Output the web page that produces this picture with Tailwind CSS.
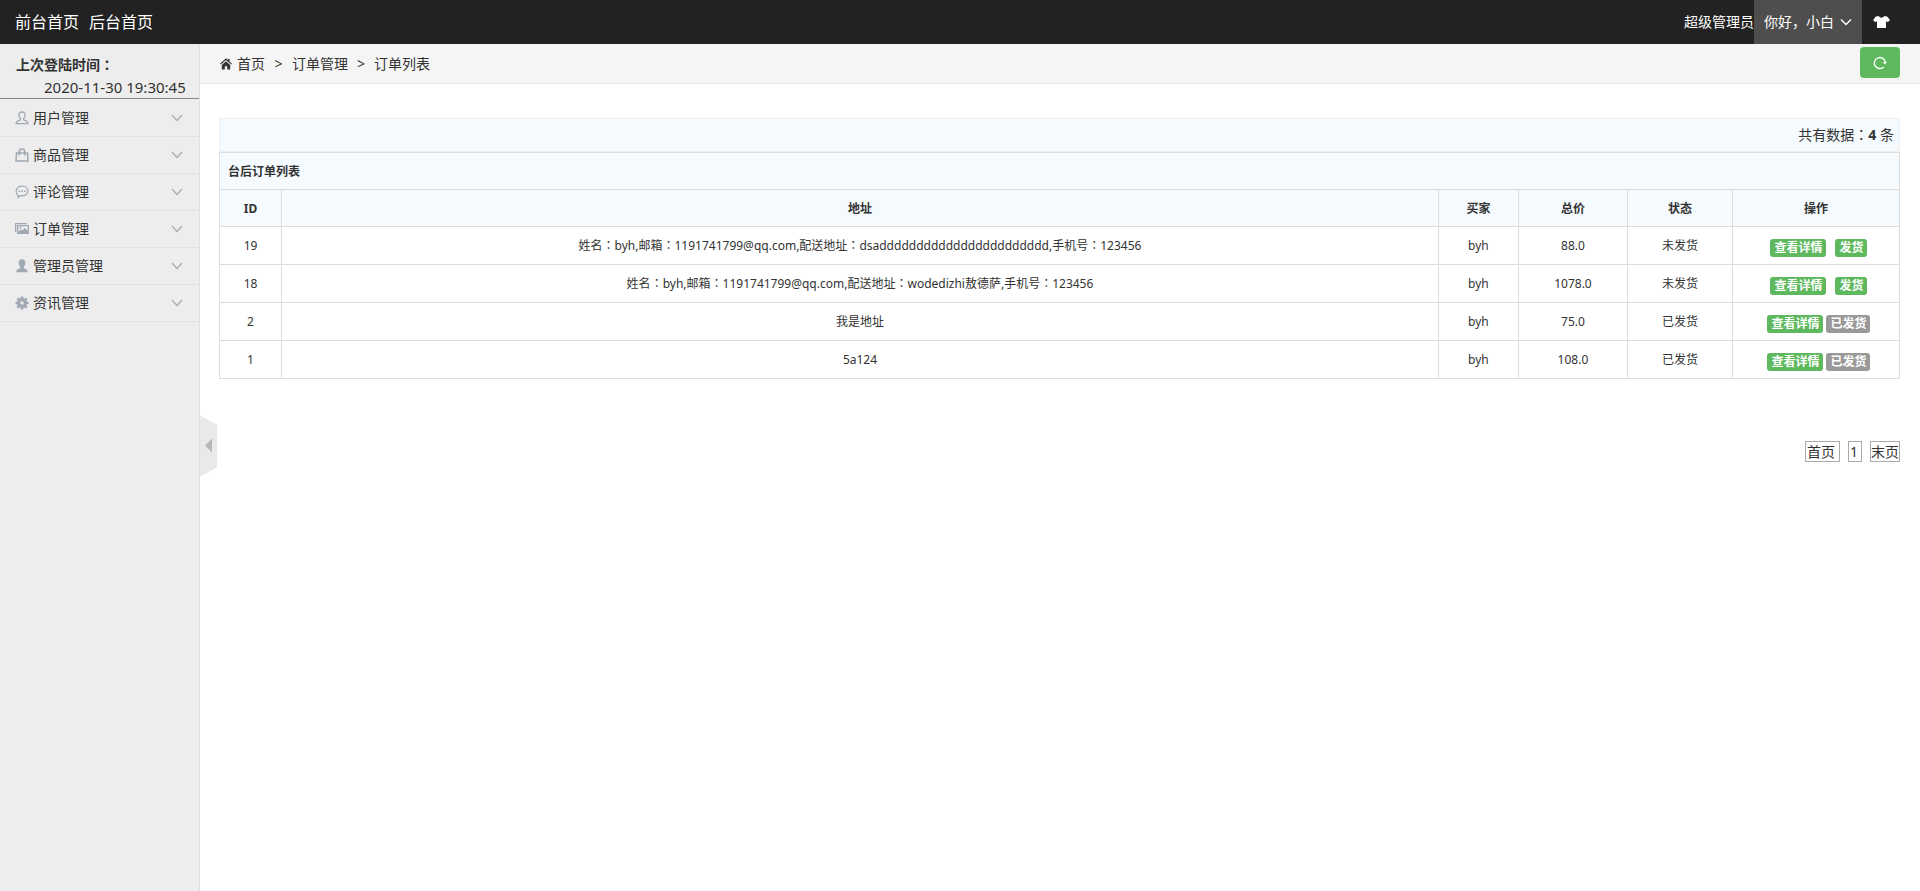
<!DOCTYPE html>
<html lang="zh-CN">
<head>
<meta charset="utf-8">
<title>订单列表</title>
<script src="https://cdn.jsdelivr.net/npm/@tailwindcss/browser@4"></script>
</head>
<body class="flex min-h-screen flex-col bg-white font-['Noto_Sans','Noto_Sans_CJK_SC',sans-serif] text-sm text-[#333]">

<svg class="hidden">
  <symbol id="down" viewBox="0 0 12 12"><path d="M1 3l5 5.500L11 3" fill="none" stroke="currentColor" stroke-width="1.200"/></symbol>
</svg>

<header class="flex h-11 shrink-0 items-center justify-between bg-[#222] text-white">
  <nav class="flex gap-2.5 pl-[15px] text-base">
    <a href="#">前台首页</a>
    <a href="#">后台首页</a>
  </nav>
  <div class="flex h-full items-center pr-[30px]">
    <span>超级管理员</span>
    <button type="button" class="flex h-full w-27 items-center justify-center gap-1.5 bg-[#4e4e4e]"><span>你好，小白</span>
      <svg class="h-3 w-3" viewBox="0 0 12 12" fill="none" stroke="currentColor" stroke-width="1.500"><path d="M1 3.500l5 5 5-5"/></svg>
    </button>
    <button type="button" aria-label="换肤" class="ml-[11px]">
      <svg class="h-4 w-[17px]" viewBox="0 0 17 16" fill="currentColor"><path d="M5.500 2Q8.500 5.300 11.500 2l3 .8L17 6.200 14.500 8.200 13 7V14H4V7L2.500 8.200 0 6.200l2.500-3.400z"/></svg>
    </button>
  </div>
</header>

<div class="flex grow">
  <aside class="w-50 shrink-0 border-r border-[#e0e0e0] bg-[#ededed]">
    <div class="border-b border-[#888] pt-2.5 pl-4 leading-[22px]">
      <p class="font-bold">上次登陆时间<span lang="zh-TW" class="font-['Noto_Sans_CJK_TC',sans-serif] leading-none">：</span></p>
      <p class="pl-7 text-[15px] whitespace-nowrap">2020-11-30 19:30:45</p>
    </div>
    <nav class="pt-px text-[#333]">
      <button type="button" class="flex h-[37px] w-full items-center border-b border-[#e2e2e2] pr-4 pl-[15px]">
        <svg class="mr-1 h-3.5 w-3.5 text-[#a0a8b3]" viewBox="0 0 14 14" fill="none" stroke="currentColor" stroke-width="1.300" stroke-linejoin="round"><path d="M7 1C4.800 1 4 2.500 4 4.200c0 1.500.5 2.600 1.400 3.400v1.200C3 9.500 1 10.200 1 12.700h12c0-2.500-2-3.200-4.400-3.900V7.600C9.500 6.800 10 5.700 10 4.200 10 2.500 9.200 1 7 1z"/></svg>
        <span>用户管理</span><svg class="ml-auto h-3 w-3 text-[#aaa]"><use href="#down"/></svg>
      </button>
      <button type="button" class="flex h-[37px] w-full items-center border-b border-[#e2e2e2] pr-4 pl-[15px]">
        <svg class="mr-1 h-3.5 w-3.5 text-[#a0a8b3]" viewBox="0 0 14 14" fill="none" stroke="currentColor" stroke-width="1.500"><path d="M1.500 5h11L13 13H1zM4.300 7.500V3.700c0-3.600 5.400-3.600 5.400 0v3.800"/></svg>
        <span>商品管理</span><svg class="ml-auto h-3 w-3 text-[#aaa]"><use href="#down"/></svg>
      </button>
      <button type="button" class="flex h-[37px] w-full items-center border-b border-[#e2e2e2] pr-4 pl-[15px]">
        <svg class="mr-1 h-3.5 w-3.5 text-[#a0a8b3]" viewBox="0 0 14 14" fill="none" stroke="currentColor" stroke-width="1.200"><path d="M3 10.500C-.5 7.500 1.300 1.200 7 1.200c8 0 8 9.600 0 9.600-.8 0-1.200 0-1.800-.2L3 12.800z"/><path d="M3.500 6.200h1.600M6.300 6.200h1.600M9.100 6.200h1.600" stroke-width="1.600"/></svg>
        <span>评论管理</span><svg class="ml-auto h-3 w-3 text-[#aaa]"><use href="#down"/></svg>
      </button>
      <button type="button" class="flex h-[37px] w-full items-center border-b border-[#e2e2e2] pr-4 pl-[15px]">
        <svg class="mr-1 h-3.5 w-3.5 text-[#a0a8b3]" viewBox="0 0 14 14" fill="currentColor"><path d="M0 1h12v1.300H1.300V10H0z"/><path fill-rule="evenodd" d="M2 3h12v9H2zM3.300 4.300v5.500L6 7.500l1.800 1 2-2.700 2.900 3V4.300z"/><circle cx="5.500" cy="5.800" r="1"/></svg>
        <span>订单管理</span><svg class="ml-auto h-3 w-3 text-[#aaa]"><use href="#down"/></svg>
      </button>
      <button type="button" class="flex h-[37px] w-full items-center border-b border-[#e2e2e2] pr-4 pl-[15px]">
        <svg class="mr-1 h-3.5 w-3.5 text-[#a0a8b3]" viewBox="0 0 14 14" fill="currentColor"><path d="M7 .3C4.600.3 3.700 2 3.700 4c0 1.600.7 3 1.600 3.800v1.400C3 9.800 1.500 10.300 1.300 13.300h11.400c-.2-3-1.700-3.500-4-4.100V7.800C9.600 7 10.300 5.600 10.300 4 10.300 2 9.400.3 7 .3z"/></svg>
        <span>管理员管理</span><svg class="ml-auto h-3 w-3 text-[#aaa]"><use href="#down"/></svg>
      </button>
      <button type="button" class="flex h-[37px] w-full items-center border-b border-[#e2e2e2] pr-4 pl-[15px]">
        <svg class="mr-1 h-3.5 w-3.5 text-[#a0a8b3]" viewBox="0 0 14 14" fill="none" stroke="currentColor"><circle cx="7" cy="7" r="3.300" stroke-width="3.200"/><path d="M7 .5v3M7 10.500v3M.5 7h3M10.500 7h3M2.300 2.300l2 2M9.700 9.700l2 2M11.700 2.300l-2 2M4.300 9.700l-2 2" stroke-width="2.600"/></svg>
        <span>资讯管理</span><svg class="ml-auto h-3 w-3 text-[#aaa]"><use href="#down"/></svg>
      </button>
    </nav>
  </aside>

  <!-- Sidebar toggle, floats over the content at mid-window -->
  <button type="button" aria-label="收起菜单" class="fixed top-1/2 left-50 -translate-y-1/2">
    <svg class="h-[61px] w-[17px]" viewBox="0 0 17 61"><path d="M0 0l17 9v43L0 61z" fill="#e9e9e9"/><path d="M12 23v14l-7-7z" fill="#b8b8b8"/></svg>
  </button>

  <main class="min-w-0 grow">
    <div class="flex h-10 items-center justify-between border-b border-[#e5e5e5] bg-[#f5f5f5] pr-5 pl-5">
      <nav class="flex items-center" aria-label="面包屑">
        <svg class="mr-[5px] h-3 w-3 text-[#333]" viewBox="0 0 12 12" fill="currentColor"><path d="M6 .3l1.800 1.600V1h1.700v2.400L12 5.700l-.8.9L6 2 .8 6.600 0 5.700z"/><path d="M6 3.200l4.200 3.700V11.500H7.200V8.300H4.800v3.200h-3V6.900z"/></svg>
        <a href="#">首页</a>
        <span class="w-[27px] text-center">&gt;</span>
        <a href="#">订单管理</a>
        <span class="w-[26px] text-center">&gt;</span>
        <span>订单列表</span>
      </nav>
      <button type="button" aria-label="刷新" class="mb-0.5 flex h-[31px] w-10 items-center justify-center rounded bg-[#5eb95e] text-white">
        <svg class="h-3.5 w-3.5" viewBox="0 0 14 14" fill="none" stroke="currentColor" stroke-width="1.400"><path d="M10.700 11A5.500 5.500 0 1 1 12.300 6.500"/><path d="M9.700 6h4.300l-2 2.500z" fill="currentColor" stroke="none"/></svg>
      </button>
    </div>

    <div class="px-5 pt-[34px] pl-[19px]">
      <div class="flex h-[34px] items-center justify-end border border-[#eee] bg-[#f5fafe] px-[5px]">
        <span>共有数据<span lang="zh-TW" class="font-['Noto_Sans_CJK_TC',sans-serif] leading-none">：</span><strong>4</strong> 条</span>
      </div>

      <table class="w-full table-fixed border-collapse text-center text-xs [&_td]:border [&_td]:border-[#ddd] [&_th]:border [&_th]:border-[#ddd] [&_th]:pt-0.5">
        <colgroup><col class="w-[62px]"><col><col class="w-20"><col class="w-[109px]"><col class="w-[105px]"><col class="w-[167px]"></colgroup>
        <thead class="bg-[#f5fafe]">
          <tr class="h-[37px]"><th colspan="6" class="px-2 text-left">台后订单列表</th></tr>
          <tr class="h-[37px]"><th>ID</th><th>地址</th><th>买家</th><th>总价</th><th>状态</th><th>操作</th></tr>
        </thead>
        <tbody>
          <tr class="h-[38px]">
            <td>19</td>
            <td>姓名<span lang="zh-TW" class="font-['Noto_Sans_CJK_TC',sans-serif] leading-none">：</span>byh,邮箱<span lang="zh-TW" class="font-['Noto_Sans_CJK_TC',sans-serif] leading-none">：</span>1191741799@qq.com,配送地址<span lang="zh-TW" class="font-['Noto_Sans_CJK_TC',sans-serif] leading-none">：</span>dsaddddddddddddddddddddddd,手机号<span lang="zh-TW" class="font-['Noto_Sans_CJK_TC',sans-serif] leading-none">：</span>123456</td>
            <td>byh</td><td>88.0</td><td>未发货</td>
            <td><div class="flex justify-center gap-[9px] pt-1 pl-1.5 leading-[18px] font-bold text-white"><a href="#" class="rounded-[3px] bg-[#5eb95e] px-1">查看详情</a><a href="#" class="rounded-[3px] bg-[#5eb95e] px-1">发货</a></div></td>
          </tr>
          <tr class="h-[38px]">
            <td>18</td>
            <td>姓名<span lang="zh-TW" class="font-['Noto_Sans_CJK_TC',sans-serif] leading-none">：</span>byh,邮箱<span lang="zh-TW" class="font-['Noto_Sans_CJK_TC',sans-serif] leading-none">：</span>1191741799@qq.com,配送地址<span lang="zh-TW" class="font-['Noto_Sans_CJK_TC',sans-serif] leading-none">：</span>wodedizhi敖德萨,手机号<span lang="zh-TW" class="font-['Noto_Sans_CJK_TC',sans-serif] leading-none">：</span>123456</td>
            <td>byh</td><td>1078.0</td><td>未发货</td>
            <td><div class="flex justify-center gap-[9px] pt-1 pl-1.5 leading-[18px] font-bold text-white"><a href="#" class="rounded-[3px] bg-[#5eb95e] px-1">查看详情</a><a href="#" class="rounded-[3px] bg-[#5eb95e] px-1">发货</a></div></td>
          </tr>
          <tr class="h-[38px]">
            <td>2</td><td>我是地址</td><td>byh</td><td>75.0</td><td>已发货</td>
            <td><div class="flex justify-center gap-[3px] pt-1 pl-1.5 leading-[18px] font-bold text-white"><a href="#" class="rounded-[3px] bg-[#5eb95e] px-1">查看详情</a><span class="rounded-[3px] bg-[#999] px-1">已发货</span></div></td>
          </tr>
          <tr class="h-[38px]">
            <td>1</td><td>5a124</td><td>byh</td><td>108.0</td><td>已发货</td>
            <td><div class="flex justify-center gap-[3px] pt-1 pl-1.5 leading-[18px] font-bold text-white"><a href="#" class="rounded-[3px] bg-[#5eb95e] px-1">查看详情</a><span class="rounded-[3px] bg-[#999] px-1">已发货</span></div></td>
          </tr>
        </tbody>
      </table>

      <nav class="mt-[62px] flex justify-end gap-2 leading-[19px]" aria-label="分页">
        <a href="#" class="border border-[#aaa] pr-1 pl-px">首页</a>
        <a href="#" class="border border-[#aaa] pr-[3px] pl-px">1</a>
        <a href="#" class="border border-[#aaa]">末页</a>
      </nav>
    </div>
  </main>
</div>
</body>
</html>
